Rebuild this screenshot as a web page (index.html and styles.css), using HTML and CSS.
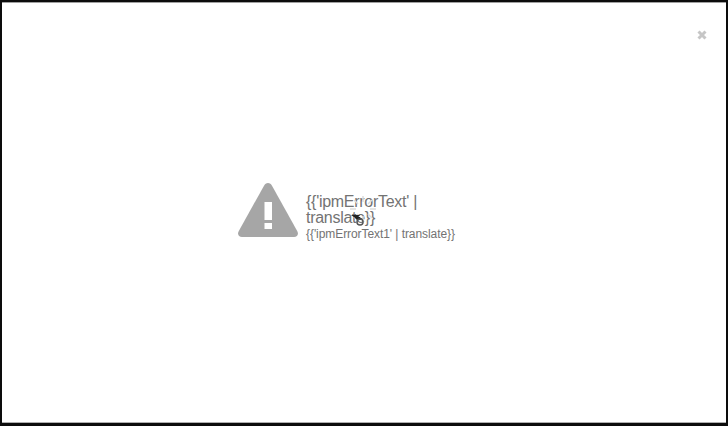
FILE: index.html
```html
<!DOCTYPE html>
<html lang="en">
<head>
<meta charset="utf-8">
<title>Error</title>
<link rel="stylesheet" href="styles.css">
</head>
<body>
<main class="dialog">
  <button class="close" aria-label="Close">
    <svg viewBox="0 0 10 10" aria-hidden="true">
      <path d="M1.500 1.500L8.500 8.500M8.500 1.500L1.500 8.500" stroke="#c6c6c6" stroke-width="3" fill="none"/>
    </svg>
  </button>
  <section class="message">
    <svg class="warn" viewBox="0 0 60 54" aria-hidden="true">
      <path fill="#a6a6a6" d="M30 0C28.200 0 27 1 26 2.700L.8 48C-.9 51.200.6 54 4 54H56C59.400 54 60.900 51.200 59.200 48L34 2.700C33 1 31.800 0 30 0Z"/>
      <rect fill="#fff" x="26.500" y="19" width="7.500" height="18"/>
      <rect fill="#fff" x="26.500" y="40" width="7.500" height="6"/>
    </svg>
    <div class="copy">
      <h1 class="title">{{'ipmErrorText' | translate}}</h1>
      <p class="sub">{{'ipmErrorText1' | translate}}</p>
      <svg class="busy" viewBox="0 0 32 36" aria-hidden="true">
        <path stroke="#dcdcdc" stroke-width="1.500" fill="none" d="M16 2V8M16 22V28M3 15H9M23 15H29M7 6L11 10M25 6L21 10M7 24L11 20M25 24L21 20"/>
        <path fill="#222" d="M4 21H13L11 23H13L15 26H10L7 23Z"/>
        <circle cx="13" cy="28" r="3" fill="none" stroke="#555" stroke-width="1.500"/>
      </svg>
    </div>
  </section>
</main>
</body>
</html>
```
FILE: styles.css
```css
html, body {
  margin: 0;
  height: 100%;
  background: #fff;
}
body {
  font-family: "Liberation Sans", Arial, sans-serif;
}
.dialog {
  position: relative;
  box-sizing: border-box;
  width: 728px;
  height: 426px;
  border-style: solid;
  border-color: #0c0c0c;
  border-width: 2px 2px 3px 2px;
  box-shadow: inset 0 1px 0 #a0a0a0, inset 0 -1px 0 #b0b0b0;
  background: #fff;
  display: flex;
  padding: 181px 0 0 236px;
}
.close {
  position: absolute;
  top: 28px;
  right: 19px;
  width: 10px;
  height: 10px;
  padding: 0;
  border: 0;
  background: none;
}
.close svg {
  display: block;
  width: 10px;
  height: 10px;
}
.message {
  display: flex;
  align-items: flex-start;
  gap: 8px;
}
.warn {
  width: 60px;
  height: 54px;
  flex: none;
}
.copy {
  position: relative;
  width: 152px;
  margin-top: 11px;
  color: #737373;
}
.title {
  margin: 0;
  font-size: 16px;
  font-weight: normal;
  line-height: 16px;
  letter-spacing: -0.28px;
}
.sub {
  margin: 0;
  font-size: 12px;
  line-height: 17px;
  letter-spacing: -0.07px;
  white-space: nowrap;
}
.busy {
  position: absolute;
  left: 41px;
  top: 0;
  width: 32px;
  height: 36px;
}
```
